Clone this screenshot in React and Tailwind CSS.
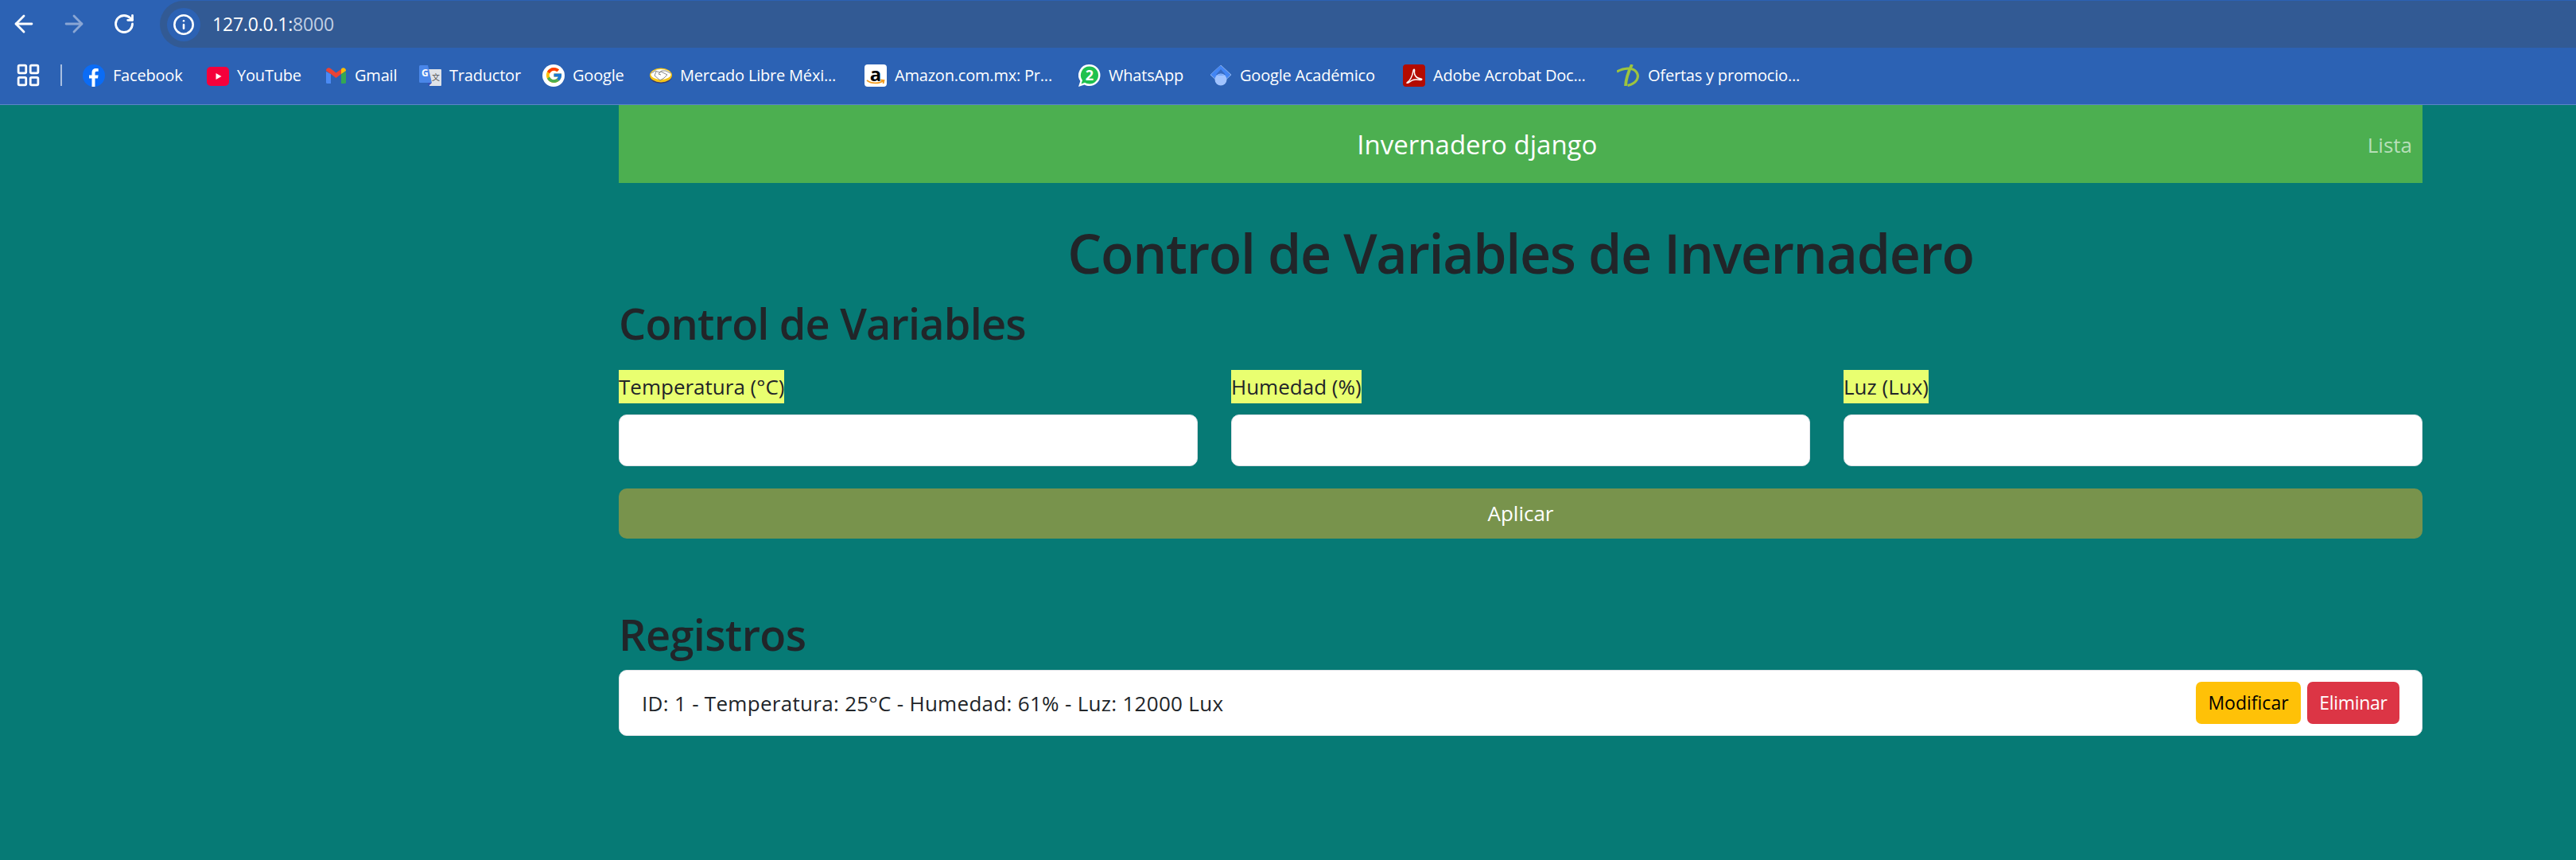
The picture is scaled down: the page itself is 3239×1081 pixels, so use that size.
import React from "react";
import { ArrowLeft, ArrowRight, RotateCw, Info, LayoutGrid } from "lucide-react";
import { FcGoogle } from "react-icons/fc";

const FacebookIcon = () => (
  <svg viewBox="0 0 28 28" className="w-7 h-7 shrink-0">
    <circle cx="14" cy="14" r="14" fill="#0b6cf5" />
    <path d="M11.5 28V17.5H8v-4h3.5v-3c0-3.6 2.1-5.4 5.200-5.400 1.500 0 2.600.2 3 .2v3.500h-2c-1.700 0-2.200.9-2.200 2.100v2.600h4.100l-.6 4h-3.500V28z" fill="#fff" />
  </svg>
);

const YoutubeIcon = () => (
  <svg viewBox="0 0 28 28" className="w-7 h-7 shrink-0">
    <rect x="0" y="3" width="28" height="24" rx="5" fill="#f5003b" />
    <path d="M11.500 11l7 4-7 4z" fill="#fff" />
  </svg>
);

const GmailIcon = () => (
  <svg viewBox="0 0 25 20" className="w-[25px] h-5 mx-[1px] shrink-0">
    <path d="M0 5v13.500A1.500 1.500 0 0 0 1.500 20H6V8z" fill="#4a8af4" />
    <path d="M19 8v12h4.500a1.500 1.500 0 0 0 1.500-1.500V5z" fill="#34a853" />
    <path d="M0 3.500C0 .8 3-.8 5.200.8L12.500 6.500 19 2v6l-6.500 5L6 8 0 4z" fill="#ea4335" />
    <path d="M19 2l.8-1.200C22-.8 25 .8 25 3.500V4l-6 4z" fill="#fbbc04" />
  </svg>
);

const TranslateIcon = () => (
  <svg viewBox="0 0 28 28" className="w-7 h-7 shrink-0">
    <path d="M9 6h18a1 1 0 0 1 1 1v19a1 1 0 0 1-1 1H13z" fill="#dfe3e8" />
    <path d="M1.500 1H11l5 22H1.500A1.500 1.500 0 0 1 0 21.500v-19A1.500 1.500 0 0 1 1.500 1z" fill="#4a86e8" />
    <path d="M11 23h5l-4 4z" fill="#3b4fb8" />
    <text x="3" y="15" fontSize="12" fontWeight="700" fill="#fff" fontFamily="Open Sans, sans-serif">G</text>
    <text x="16" y="20" fontSize="10" fill="#555" fontFamily="Noto Sans CJK SC, sans-serif">文</text>
  </svg>
);

const GoogleIcon = () => (
  <span className="w-7 h-7 shrink-0 rounded-full bg-white flex items-center justify-center">
    <FcGoogle className="w-[23px] h-[23px]" />
  </span>
);

const MercadoIcon = () => (
  <svg viewBox="0 0 28 20" className="w-7 h-5 shrink-0">
    <ellipse cx="14" cy="10.500" rx="14" ry="9.500" fill="#3a3d6e" />
    <ellipse cx="14" cy="9.500" rx="14" ry="9" fill="#f5c518" />
    <ellipse cx="14" cy="8.500" rx="12.500" ry="6.500" fill="#fff" />
    <path d="M2 7l5-3 5 2 3-2 5 0 6 3M8 5l-2 5 7 6 5-3 4-4-8-4-3 3 3 1" stroke="#8a8a8a" strokeWidth="1" fill="none" />
  </svg>
);

const AmazonIcon = () => (
  <span className="relative w-7 h-7 shrink-0 rounded-[4px] bg-white flex justify-center">
    <span className="text-black font-bold text-[24px] leading-[24px]">a</span>
    <svg viewBox="0 0 28 28" className="absolute inset-0 w-7 h-7">
      <path d="M3 20c6 4.500 15 4.500 21 .5M20 19.500l4.500 .5-1 4" stroke="#f39c1f" strokeWidth="1.800" fill="none" />
    </svg>
  </span>
);

const WhatsappIcon = () => (
  <span className="relative w-7 h-7 shrink-0">
    <svg viewBox="0 0 28 28" className="absolute inset-0 w-7 h-7">
      <path d="M14 0a13.500 13.500 0 0 1 0 27c-2.500 0-4.500-.5-6.500-1.500L0 28l2.300-7A13.500 13.500 0 0 1 14 0z" fill="#fff" />
      <path d="M14 2.500a11 11 0 0 1 0 22c-2.200 0-4.200-.6-6-1.700L3.500 24.500 5 20A11 11 0 0 1 14 2.500z" fill="#1fc14e" />
    </svg>
    <span className="absolute inset-0 flex items-center justify-center pb-[2px] text-white font-bold text-[18px] leading-none">2</span>
  </span>
);

const ScholarIcon = () => (
  <svg viewBox="0 0 28 28" className="w-7 h-7 shrink-0">
    <path d="M14 1l13 12-13 12L1 13z" fill="#4285f4" stroke="#8fb3ea" strokeWidth="1" />
    <path d="M14 1v10a7 7 0 0 0-6 2H1z" fill="#4285f4" />
    <path d="M14 6l6 7H8z" fill="#356ac3" />
    <circle cx="14" cy="19" r="7.500" fill="#a0c3ff" />
    <path d="M6.500 14h15l-3 0a6 6 0 0 0-9 0z" fill="#76a7fa" />
  </svg>
);

const AcrobatIcon = () => (
  <svg viewBox="0 0 28 28" className="w-7 h-7 shrink-0">
    <rect width="28" height="28" rx="4" fill="#b30b00" />
    <path d="M5 23c4-2 7-9 8-15 .3-2.500 2-2.500 1.500 .5-.7 4.500 2 9 8 9.500 2 .2 1.500 2-1 1.500-5-1-10-.5-13 2.500-2 1.500-4 1.500-3.500 1" stroke="#fff" strokeWidth="1.500" fill="none" />
  </svg>
);

const OfertasIcon = () => (
  <svg viewBox="0 0 29 28" className="w-[29px] h-7 shrink-0">
    <path d="M0 9c6-3.500 13-4.500 18-3.500 8 2 10 9 7 14-2.500 4-7 6-11.500 7" stroke="#9dc43f" strokeWidth="3.200" fill="none" />
    <path d="M19 0c-4 8-7.500 17-8 27" stroke="#9dc43f" strokeWidth="3.800" fill="none" />
  </svg>
);

const bookmarks = [
  { label: "Facebook", icon: FacebookIcon, width: "w-[89px]" },
  { label: "YouTube", icon: YoutubeIcon, width: "w-[82px]" },
  { label: "Gmail", icon: GmailIcon, width: "w-[52px]" },
  { label: "Traductor", icon: TranslateIcon, width: "w-[88px]" },
  { label: "Google", icon: GoogleIcon, width: "w-[68px]" },
  { label: "Mercado Libre Méxi...", icon: MercadoIcon, width: "w-[203px]" },
  { label: "Amazon.com.mx: Pr...", icon: AmazonIcon, width: "w-[202px]" },
  { label: "WhatsApp", icon: WhatsappIcon, width: "w-[98px]" },
  { label: "Google Académico", icon: ScholarIcon, width: "w-[176px]" },
  { label: "Adobe Acrobat Doc...", icon: AcrobatIcon, width: "w-[202px]" },
  { label: "Ofertas y promocio...", icon: OfertasIcon, width: "w-[193px]" },
];

const fields = ["Temperatura (°C)", "Humedad (%)", "Luz (Lux)"];

const BrowserBar = () => (
  <div className="bg-[#2c62b4] text-white">
    <div className="h-[60px] flex items-center">
      <div className="w-[201px] flex items-center pl-[13px] gap-[29px] shrink-0">
        <ArrowLeft className="w-[34px] h-[34px]" strokeWidth={2} />
        <ArrowRight className="w-[34px] h-[34px] text-[#8aa6d4]" strokeWidth={2} />
        <span className="w-[34px] h-[34px] flex items-center justify-center">
          <RotateCw className="w-7 h-7" strokeWidth={2.4} />
        </span>
      </div>
      <div className="flex-1 h-[59px] mt-px bg-[#325a94] rounded-l-full flex items-center pl-[9px]">
        <span className="w-[42px] h-[42px] rounded-full bg-[#2c62b4] flex items-center justify-center">
          <Info className="w-7 h-7" strokeWidth={2.2} />
        </span>
        <span className="ml-[15px] text-[23px] tracking-[-0.2px]">
          127.0.0.1:<span className="text-[#c3cfe3]">8000</span>
        </span>
      </div>
    </div>
    <div className="h-[72px] border-b border-[#5b85c7] flex items-center pl-[19px] pb-[2px]">
      <LayoutGrid className="w-[33px] h-[33px]" strokeWidth={2} />
      <span className="ml-[24px] mr-[26px] w-[2px] h-[27px] bg-[#a9bfe0]" />
      <div className="flex items-center gap-[29px]">
        {bookmarks.map((b) => (
          <div key={b.label} className="flex items-center gap-[10px]">
            <b.icon />
            <span className={`${b.width} whitespace-nowrap text-[20px] tracking-[-0.2px]`}>{b.label}</span>
          </div>
        ))}
      </div>
    </div>
  </div>
);

export default function App() {
  return (
    <div className="min-h-screen bg-[#067a75] font-['Open_Sans',sans-serif] text-[#212529] text-[26px]">
      <BrowserBar />

      <div className="w-[2268px] ml-[778px]">
        <nav className="h-[98px] pt-[2px] bg-[#4caf50] flex items-center">
          <span className="flex-1 text-center text-white text-[33px]">Invernadero django</span>
          <span className="pr-[13px] pl-[40px] text-[#b7dfb9] text-[26px]">Lista</span>
        </nav>

        <h1 className="mt-[46px] text-center text-[68px] leading-[84px] font-semibold tracking-[-1.3px]">
          Control de Variables de Invernadero
        </h1>
        <h2 className="mt-[13px] text-[54px] leading-[67px] font-semibold tracking-[-0.8px]">Control de Variables</h2>

        <div className="mt-[25px] grid grid-cols-3 gap-x-[42px]">
          {fields.map((f) => (
            <div key={f}>
              <label className="inline-block bg-[#e9ff70] leading-[42px] h-[42px] align-top">{f}</label>
              <input className="block mt-[14px] w-full h-[65px] bg-white rounded-[10px] border border-[#dee2e6]" />
            </div>
          ))}
        </div>

        <button className="mt-[28px] w-full h-[63px] bg-[#78934c] rounded-[10px] text-white">Aplicar</button>

        <h2 className="mt-[87px] text-[54px] leading-[67px] font-semibold tracking-[-0.6px]">Registros</h2>

        <div className="mt-[11px] h-[83px] pt-[2px] bg-white rounded-[10px] border border-[#dee2e6] flex items-center justify-between pl-[28px] pr-[28px]">
          <span className="tracking-[0.3px]">ID: 1 - Temperatura: 25°C - Humedad: 61% - Luz: 12000 Lux</span>
          <div className="flex gap-2 -mt-[2px]">
            <button className="w-[132px] h-[53px] bg-[#ffc107] rounded-[7px] text-black text-[23px]">Modificar</button>
            <button className="w-[116px] h-[53px] bg-[#dc3545] rounded-[7px] text-white text-[23px] tracking-[-0.3px]">Eliminar</button>
          </div>
        </div>
      </div>
    </div>
  );
}
